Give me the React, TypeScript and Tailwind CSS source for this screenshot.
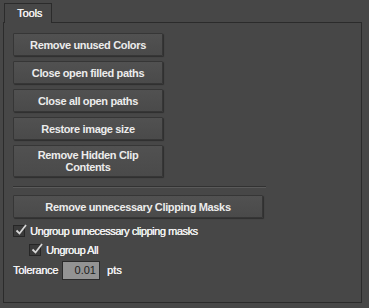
import React from "react";

const font = { fontFamily: '"Liberation Sans", Arial, sans-serif' };

function Btn({ children, className = "" }: { children: React.ReactNode; className?: string }) {
  return (
    <div
      className={
        "flex items-center justify-center text-center leading-[12px] rounded-[1px] border border-[#363636] bg-gradient-to-b from-[#515151] to-[#4a4a4a] shadow-[1px_1px_1px_rgba(0,0,0,0.35)] text-[11px] font-bold tracking-[-0.35px] text-[#ececec] " +
        className
      }
    >
      {children}
    </div>
  );
}

function Check({ label, className = "" }: { label: string; className?: string }) {
  return (
    <div className={"flex items-center h-[14px] " + className}>
      <div className="relative w-[12px] h-[12px] bg-[#3a3a3a] border border-[#262626]">
        <svg className="absolute left-[1px] -top-[3px]" width="13" height="13" viewBox="0 0 13 13">
          <path d="M1.5 7.5 L4.5 10.5 L11 2" fill="none" stroke="#d6d6d6" strokeWidth="1.8" />
        </svg>
      </div>
      <span className="ml-[5px] text-[11px] tracking-[-0.45px] text-[#f2f2f2] [text-shadow:0.3px_0_0_#f2f2f2]">{label}</span>
    </div>
  );
}

export default function App() {
  return (
    <div className="w-[369px] h-[308px] bg-[#474747] pt-[3px] pl-[3px]" style={font}>
      <div className="relative z-10 ml-[1px] w-[48px] h-[20px] -mb-px border-t border-l border-r border-[#2b2b2b] bg-[#474747] flex items-center pl-[12px]">
        <span className="text-[11px] tracking-[-0.1px] text-[#f2f2f2] [text-shadow:0.3px_0_0_#f2f2f2]">Tools</span>
      </div>
      <div className="w-[359px] h-[281px] border border-[#2b2b2b] bg-[#474747] pl-[9px] pt-[10px]">
        <div className="flex flex-col gap-[5px] w-[150px]">
          <Btn className="h-[23px]">Remove unused Colors</Btn>
          <Btn className="h-[23px]">Close open filled paths</Btn>
          <Btn className="h-[23px]">Close all open paths</Btn>
          <Btn className="h-[23px]">Restore image size</Btn>
          <Btn className="h-[32px]">
            Remove Hidden Clip
            <br />
            Contents
          </Btn>
        </div>
        <div className="mt-[9px] w-[253px] h-[2px] border-t border-[#323232] border-b-[1px] border-b-[#5a5a5a]" />
        <Btn className="mt-[7px] w-[250px] h-[23px]">Remove unnecessary Clipping Masks</Btn>
        <Check className="mt-[6px]" label="Ungroup unnecessary clipping masks" />
        <Check className="mt-[5px] ml-[16px]" label="Ungroup All" />
        <div className="mt-[4px] flex items-center h-[19px]">
          <span className="text-[11px] tracking-[-0.3px] text-[#f2f2f2] [text-shadow:0.3px_0_0_#f2f2f2] w-[49px]">Tolerance</span>
          <div className="w-[38px] h-[19px] bg-[#939393] border border-[#2a2a2a] flex items-center justify-end pr-[3px] text-[11px] text-[#1c1c1c]">
            0.01
          </div>
          <span className="ml-[7px] text-[11px] text-[#f2f2f2] [text-shadow:0.3px_0_0_#f2f2f2]">pts</span>
        </div>
      </div>
    </div>
  );
}
